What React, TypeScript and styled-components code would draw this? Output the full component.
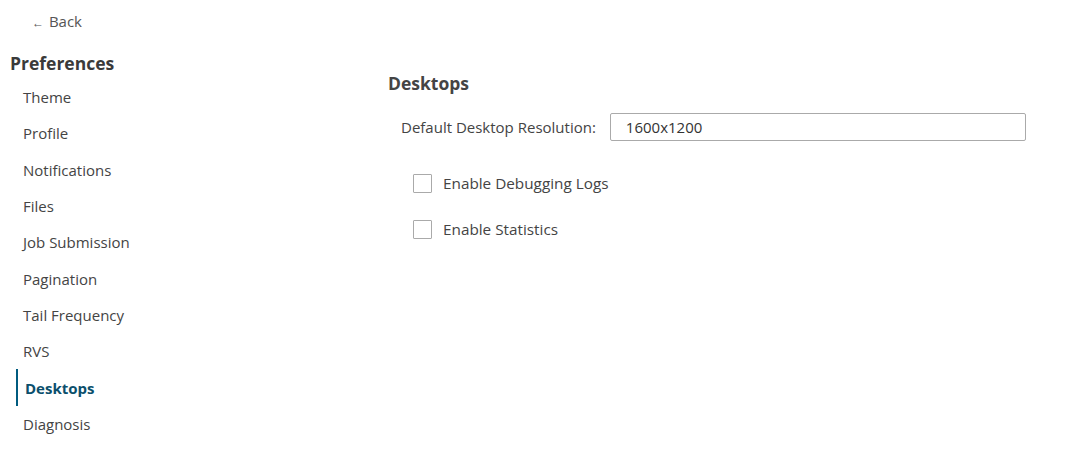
import React, { useState } from "react";
import styled, { createGlobalStyle } from "styled-components";

const GlobalStyle = createGlobalStyle`
  body {
    margin: 0;
    background: #ffffff;
    font-family: "Open Sans", "Liberation Sans", sans-serif;
    color: #444444;
  }
`;

const navItems = [
  "Theme",
  "Profile",
  "Notifications",
  "Files",
  "Job Submission",
  "Pagination",
  "Tail Frequency",
  "RVS",
  "Desktops",
  "Diagnosis",
];

const App: React.FC = () => {
  const [active, setActive] = useState("Desktops");
  const [debugLogs, setDebugLogs] = useState(false);
  const [stats, setStats] = useState(false);

  return (
    <>
      <GlobalStyle />
      <Page>
        <Sidebar>
          <BackLink href="#">
            <BackArrow>←</BackArrow> Back
          </BackLink>
          <SideTitle>Preferences</SideTitle>
          <NavList>
            {navItems.map((item) => (
              <NavItem
                key={item}
                $active={item === active}
                onClick={() => setActive(item)}
              >
                {item}
              </NavItem>
            ))}
          </NavList>
        </Sidebar>
        <Main>
          <SectionTitle>Desktops</SectionTitle>
          <FieldRow>
            <FieldLabel>Default Desktop Resolution:</FieldLabel>
            <TextInput defaultValue="1600x1200" />
          </FieldRow>
          <CheckList>
            <CheckRow>
              <CheckBox
                type="checkbox"
                checked={debugLogs}
                onChange={() => setDebugLogs(!debugLogs)}
              />
              Enable Debugging Logs
            </CheckRow>
            <CheckRow>
              <CheckBox
                type="checkbox"
                checked={stats}
                onChange={() => setStats(!stats)}
              />
              Enable Statistics
            </CheckRow>
          </CheckList>
        </Main>
      </Page>
    </>
  );
};

export default App;

const Page = styled.div`
  display: flex;
  width: 1065px;
  height: 467px;
`;

const Sidebar = styled.div`
  width: 378px;
  flex-shrink: 0;
  padding: 10px 0 0 10px;
  box-sizing: border-box;
`;

const BackLink = styled.a`
  display: inline-block;
  margin-left: 22px;
  font-size: 15px;
  line-height: 20px;
  color: #555555;
  text-decoration: none;
`;

const BackArrow = styled.span`
  font-size: 12px;
  margin-right: 1px;
`;

const SideTitle = styled.div`
  margin-top: 18px;
  font-size: 17.5px;
  font-weight: 700;
  line-height: 24px;
  color: #3a3a3a;
`;

const NavList = styled.div`
  display: flex;
  flex-direction: column;
  margin-top: 4px;
`;

const NavItem = styled.div<{ $active?: boolean }>`
  height: 36.3px;
  display: flex;
  align-items: center;
  margin-left: 6px;
  padding-left: 7px;
  border-left: ${(p) => (p.$active ? "2px solid #005b7f" : "none")};
  font-size: 15px;
  font-weight: ${(p) => (p.$active ? 700 : 400)};
  color: ${(p) => (p.$active ? "#0b4f6c" : "#444444")};
  cursor: pointer;
  box-sizing: border-box;
`;

const Main = styled.div`
  flex: 1;
  padding: 71px 0 0 10px;
  box-sizing: border-box;
`;

const SectionTitle = styled.div`
  font-size: 17.5px;
  font-weight: 700;
  line-height: 24px;
  color: #444444;
`;

const FieldRow = styled.div`
  display: flex;
  align-items: center;
  margin-top: 18px;
  padding-left: 13px;
`;

const FieldLabel = styled.label`
  font-size: 15px;
  color: #444444;
  margin-right: 14px;
`;

const TextInput = styled.input`
  width: 416px;
  height: 28px;
  box-sizing: border-box;
  border: 1px solid #aaaaaa;
  border-radius: 2px;
  padding: 0 15px;
  font-family: "Open Sans", "Liberation Sans", sans-serif;
  font-size: 15px;
  color: #333333;
  outline: none;
`;

const CheckList = styled.div`
  display: flex;
  flex-direction: column;
  gap: 24px;
  margin-top: 31px;
  padding-left: 25px;
`;

const CheckRow = styled.label`
  display: flex;
  align-items: center;
  gap: 11px;
  font-size: 15.3px;
  line-height: 22px;
  color: #444444;
  cursor: pointer;
`;

const CheckBox = styled.input`
  appearance: none;
  margin: 0;
  width: 19px;
  height: 19px;
  border: 1px solid #aaaaaa;
  border-radius: 1px;
  background: #ffffff;
  cursor: pointer;

  &:checked {
    background: #005b7f;
    border-color: #005b7f;
  }
`;
